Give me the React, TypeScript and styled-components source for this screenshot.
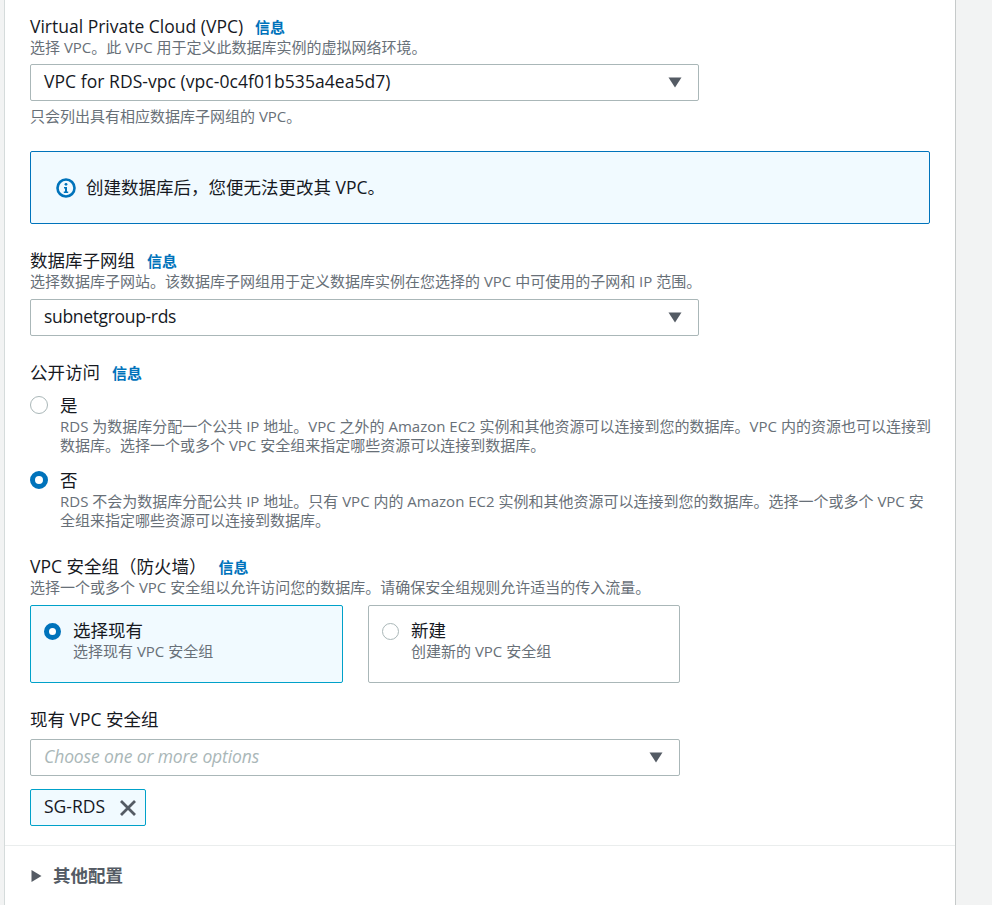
import React from 'react'
import styled, { createGlobalStyle } from 'styled-components'

const GlobalStyle = createGlobalStyle`
  html, body {
    margin: 0;
    padding: 0;
    height: 905px;
    overflow: hidden;
    background: #f2f3f3;
  }
  body {
    font-family: 'Open Sans', 'Noto Sans CJK SC', sans-serif;
    color: #16191f;
  }
  * {
    box-sizing: border-box;
  }
`

const Page = styled.div`
  height: 905px;
  padding-left: 4px;
  overflow: hidden;
`

const Panel = styled.main`
  width: 952px;
  height: 905px;
  background: #fff;
  border-left: 1px solid #d5dbdb;
  border-right: 1px solid #c6caca;
`

const Body = styled.div`
  padding: 16px 25px 0 25px;
  height: 845px;
`

const Field = styled.section<{ $top?: number }>`
  margin-top: ${(p) => p.$top ?? 0}px;
`

const LabelRow = styled.div`
  display: flex;
  align-items: baseline;
  gap: 12px;
  height: 22px;
  line-height: 20px;
  font-size: 17.5px;
`

const InfoLink = styled.a`
  font-size: 15px;
  font-weight: 700;
  color: #0073bb;
`

const Desc = styled.div`
  height: 20px;
  line-height: 18px;
  font-size: 15px;
  color: #687078;
`

const Helper = styled(Desc)`
  margin-top: 6px;
`

const Select = styled.div<{ $w: number; $top?: number }>`
  display: flex;
  align-items: center;
  justify-content: space-between;
  width: ${(p) => p.$w}px;
  height: 37px;
  margin-top: ${(p) => p.$top ?? 6}px;
  padding: 0 16px 0 13px;
  border: 1px solid #aab7b8;
  border-radius: 2px;
  font-size: 17.5px;
`

const SelectValue = styled.span<{ $track?: number }>`
  display: block;
  margin-bottom: 3px;
  letter-spacing: ${(p) => p.$track ?? 0}px;
`

const Placeholder = styled(SelectValue)`
  font-style: italic;
  color: #aab7b8;
`

const Caret = styled.svg`
  width: 14px;
  height: 11px;
  flex: none;
`

const Alert = styled.div`
  display: flex;
  align-items: center;
  gap: 10px;
  width: 900px;
  height: 73px;
  margin-top: 24px;
  padding-left: 25px;
  border: 1px solid #0073bb;
  border-radius: 2px;
  background: #f1faff;
  font-size: 17.5px;
`

const AlertText = styled.span`
  display: block;
  margin-bottom: 2px;
`

const RadioMark = styled.span<{ $on?: boolean; $size?: number }>`
  display: block;
  flex: none;
  width: ${(p) => p.$size ?? 18}px;
  height: ${(p) => p.$size ?? 18}px;
  border-radius: 50%;
  background: #fff;
  border: ${(p) => (p.$on ? '5px solid #0073bb' : '1.5px solid #aab7b8')};
`

const RadioGroup = styled.div`
  display: flex;
  flex-direction: column;
  gap: 14px;
  margin-top: 9px;
`

const RadioRow = styled.div`
  display: grid;
  grid-template-columns: 18px 1fr;
  column-gap: 12px;
`

const RadioMarkCell = styled.div`
  height: 24px;
  display: flex;
  align-items: center;
`

const RadioTitle = styled.div`
  height: 24px;
  line-height: 24px;
  font-size: 17.5px;
`

const RadioDesc = styled.div`
  grid-column: 2;
  margin-right: -3px;
  line-height: 18.5px;
  font-size: 15px;
  color: #687078;
`

const Tiles = styled.div`
  display: flex;
  gap: 25px;
  margin-top: 7px;
`

const Tile = styled.div<{ $on?: boolean }>`
  display: grid;
  grid-template-columns: 18px 1fr;
  grid-auto-rows: min-content;
  column-gap: 11px;
  width: ${(p) => (p.$on ? 313 : 312)}px;
  height: 78px;
  padding: 13px 13px;
  border: 1px solid ${(p) => (p.$on ? '#00a1c9' : '#aab7b8')};
  border-radius: 2px;
  background: ${(p) => (p.$on ? '#f1faff' : '#fff')};
`

const TileTitle = styled.div`
  height: 24px;
  line-height: 22px;
  font-size: 17.5px;
`

const TileDesc = styled.div`
  grid-column: 2;
  height: 20px;
  line-height: 16px;
  font-size: 15px;
  color: #687078;
`

const Token = styled.div`
  display: inline-flex;
  align-items: center;
  justify-content: space-between;
  width: 116px;
  height: 37px;
  margin-top: 13px;
  padding: 0 8px 0 13px;
  border: 1px solid #00a1c9;
  border-radius: 2px;
  background: #f1faff;
  font-size: 17.5px;
`

const TokenText = styled.span`
  display: block;
  margin-bottom: 4px;
`

const CloseIcon = styled.svg`
  width: 18px;
  height: 18px;
`

const Footer = styled.div`
  display: flex;
  align-items: center;
  gap: 11px;
  height: 60px;
  padding: 0 0 0 26px;
  border-top: 1px solid #eaeded;
  font-size: 17.5px;
  font-weight: 700;
  color: #545b64;
`

const FooterText = styled.span`
  display: block;
  margin-bottom: 2px;
`

const Triangle = styled.svg`
  width: 11px;
  height: 14px;
`

const CaretDown = () => (
  <Caret viewBox="0 0 14 11">
    <path d="M0.5 0.5h13L7 10.5z" fill="#545b64" />
  </Caret>
)

const InfoIcon = () => (
  <svg width="20" height="20" viewBox="0 0 20 20" style={{ flex: 'none' }}>
    <circle cx="10" cy="10" r="8.5" fill="none" stroke="#0073bb" strokeWidth="2.6" />
    <circle cx="10" cy="6.3" r="1.4" fill="#0073bb" />
    <path d="M8 9h3v4.5h1.2v1.5H7.8v-1.5H9V10.4H8z" fill="#0073bb" />
  </svg>
)

const Label = ({ text }: { text: string }) => (
  <LabelRow>
    <span>{text}</span>
    <InfoLink>信息</InfoLink>
  </LabelRow>
)

const App: React.FC = () => {
  return (
    <Page>
      <GlobalStyle />
      <Panel>
        <Body>
          <Field>
            <Label text="Virtual Private Cloud (VPC)" />
            <Desc>选择 VPC。此 VPC 用于定义此数据库实例的虚拟网络环境。</Desc>
            <Select $w={669}>
              <SelectValue $track={0.05}>VPC for RDS-vpc (vpc-0c4f01b535a4ea5d7)</SelectValue>
              <CaretDown />
            </Select>
            <Helper>只会列出具有相应数据库子网组的 VPC。</Helper>
          </Field>

          <Alert>
            <InfoIcon />
            <AlertText>创建数据库后，您便无法更改其 VPC。</AlertText>
          </Alert>

          <Field $top={26}>
            <Label text="数据库子网组" />
            <Desc>选择数据库子网站。该数据库子网组用于定义数据库实例在您选择的 VPC 中可使用的子网和 IP 范围。</Desc>
            <Select $w={669} $top={7}>
              <SelectValue $track={-0.33}>subnetgroup-rds</SelectValue>
              <CaretDown />
            </Select>
          </Field>

          <Field $top={26}>
            <Label text="公开访问" />
            <RadioGroup>
              <RadioRow>
                <RadioMarkCell>
                  <RadioMark />
                </RadioMarkCell>
                <RadioTitle>是</RadioTitle>
                <RadioDesc>
                  RDS 为数据库分配一个公共 IP 地址。VPC 之外的 Amazon EC2 实例和其他资源可以连接到您的数据库。VPC 内的资源也可以连接到数据库。选择一个或多个 VPC 安全组来指定哪些资源可以连接到数据库。
                </RadioDesc>
              </RadioRow>
              <RadioRow>
                <RadioMarkCell>
                  <RadioMark $on />
                </RadioMarkCell>
                <RadioTitle>否</RadioTitle>
                <RadioDesc>
                  RDS 不会为数据库分配公共 IP 地址。只有 VPC 内的 Amazon EC2 实例和其他资源可以连接到您的数据库。选择一个或多个 VPC 安全组来指定哪些资源可以连接到数据库。
                </RadioDesc>
              </RadioRow>
            </RadioGroup>
          </Field>

          <Field $top={27}>
            <Label text="VPC 安全组（防火墙）" />
            <Desc>选择一个或多个 VPC 安全组以允许访问您的数据库。请确保安全组规则允许适当的传入流量。</Desc>
            <Tiles>
              <Tile $on>
                <RadioMarkCell>
                  <RadioMark $on $size={17} />
                </RadioMarkCell>
                <TileTitle>选择现有</TileTitle>
                <TileDesc>选择现有 VPC 安全组</TileDesc>
              </Tile>
              <Tile>
                <RadioMarkCell>
                  <RadioMark $size={17} />
                </RadioMarkCell>
                <TileTitle>新建</TileTitle>
                <TileDesc>创建新的 VPC 安全组</TileDesc>
              </Tile>
            </Tiles>
          </Field>

          <Field $top={26}>
            <LabelRow>现有 VPC 安全组</LabelRow>
            <Select $w={650} $top={8}>
              <Placeholder $track={-0.12}>Choose one or more options</Placeholder>
              <CaretDown />
            </Select>
            <Token>
              <TokenText>SG-RDS</TokenText>
              <CloseIcon viewBox="0 0 18 18">
                <path d="M2 2l14 14M16 2L2 16" stroke="#545b64" strokeWidth="2.8" fill="none" />
              </CloseIcon>
            </Token>
          </Field>
        </Body>
        <Footer>
          <Triangle viewBox="0 0 11 14">
            <path d="M0.5 1v12L10.5 7z" fill="#545b64" />
          </Triangle>
          <FooterText>其他配置</FooterText>
        </Footer>
      </Panel>
    </Page>
  )
}

export default App
